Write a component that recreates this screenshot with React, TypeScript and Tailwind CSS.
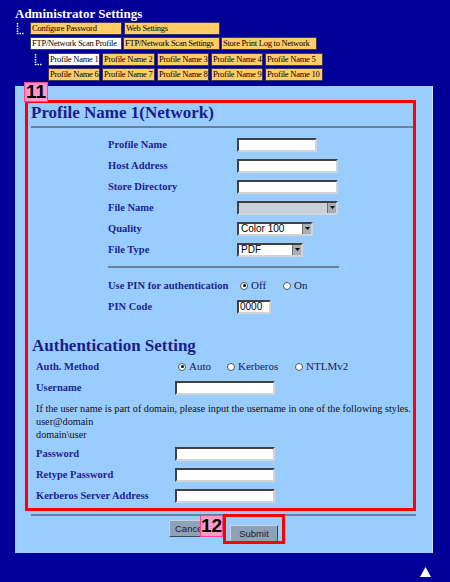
import React from "react";

function Tab({ label, active, w }: { label: string; active?: boolean; w: string }) {
  return (
    <div
      className={`${w} h-[13px] border border-[#3a3a5a] px-[1px] text-[8.5px] tracking-[-0.25px] leading-[11px] whitespace-nowrap text-black ${
        active ? "bg-white" : "bg-[#ffcc66]"
      }`}
    >
      {label}
    </div>
  );
}

function TreeIcon() {
  return (
    <svg width="10" height="12" viewBox="0 0 10 12" className="mt-[1px]">
      <path d="M1.5 0 V10.5 H8.5" stroke="#ffffff" strokeWidth="1.5" strokeDasharray="1.5 1" fill="none" />
    </svg>
  );
}

function TextInput({ w, value }: { w: string; value?: string }) {
  return (
    <div
      className={`${w} h-[14px] bg-white border-2 border-t-[#404040] border-l-[#404040] border-b-[#d4d4d4] border-r-[#d4d4d4] font-['Liberation_Sans',sans-serif] text-[10px] leading-[10px] pl-[1px] text-black`}
    >
      {value}
    </div>
  );
}

function Select({ w, value, blurred }: { w: string; value?: string; blurred?: boolean }) {
  return (
    <div
      className={`${w} h-[14px] flex border-2 border-t-[#404040] border-l-[#404040] border-b-[#d4d4d4] border-r-[#d4d4d4] ${
        blurred ? "bg-[#c9d0d8]" : "bg-white"
      }`}
    >
      <div className="flex-1 font-['Liberation_Sans',sans-serif] text-[10px] leading-[10px] pl-[2px] text-black">{value}</div>
      <div className="w-[9px] bg-[#a9adb5] border-l border-[#707070] flex items-center justify-center">
        <svg width="5" height="3" viewBox="0 0 5 3">
          <path d="M0 0 H5 L2.5 3 Z" fill="#000" />
        </svg>
      </div>
    </div>
  );
}

function Radio({ checked, label, w }: { checked?: boolean; label: string; w: string }) {
  return (
    <div className={`${w} flex items-center gap-[3px]`}>
      <span className="w-[8px] h-[8px] rounded-full bg-white border border-[#555] flex items-center justify-center">
        {checked && <span className="w-[3px] h-[3px] rounded-full bg-black" />}
      </span>
      <span className="text-[11px] text-[#1a1a50]">{label}</span>
    </div>
  );
}

function Row({ label, cols, children }: { label: string; cols: string; children: React.ReactNode }) {
  return (
    <div className={`grid ${cols} h-[21px] items-center`}>
      <div className="text-[10.5px] font-bold text-[#1f1f8f] whitespace-nowrap">{label}</div>
      <div className="flex items-center">{children}</div>
    </div>
  );
}

export default function App() {
  const top = "grid-cols-[129px_1fr]";
  const auth = "grid-cols-[139px_1fr]";
  return (
    <div className="w-[450px] h-[582px] overflow-hidden bg-[#000099] font-['Liberation_Serif',serif]">
      <div className="pl-[15px] pt-[6px] text-[13px] font-bold leading-[16px] text-white">Administrator Settings</div>

      {/* tab tree */}
      <div className="pl-[16px] flex">
        <div className="w-[14px]">
          <TreeIcon />
        </div>
        <div className="flex flex-col gap-[2px]">
          <div className="flex gap-[2px]">
            <Tab w="w-[92px]" label="Configure Password" />
            <Tab w="w-[96px]" label="Web Settings" />
          </div>
          <div className="flex gap-[1px]">
            <Tab w="w-[92px]" label="FTP/Network Scan Profile" active />
            <Tab w="w-[97px]" label="FTP/Network Scan Settings" />
            <Tab w="w-[96px]" label="Store Print Log to Network" />
          </div>
        </div>
      </div>
      <div className="pl-[34px] mt-[3px] flex">
        <div className="w-[14px]">
          <TreeIcon />
        </div>
        <div className="flex flex-col gap-[2px]">
          <div className="flex gap-[2px]">
            <Tab w="w-[52px]" label="Profile Name 1" active />
            <Tab w="w-[53px]" label="Profile Name 2" />
            <Tab w="w-[52px]" label="Profile Name 3" />
            <Tab w="w-[52px]" label="Profile Name 4" />
            <Tab w="w-[58px]" label="Profile Name 5" />
          </div>
          <div className="flex gap-[2px]">
            <Tab w="w-[52px]" label="Profile Name 6" />
            <Tab w="w-[53px]" label="Profile Name 7" />
            <Tab w="w-[52px]" label="Profile Name 8" />
            <Tab w="w-[52px]" label="Profile Name 9" />
            <Tab w="w-[58px]" label="Profile Name 10" />
          </div>
        </div>
      </div>

      {/* main panel */}
      <div className="ml-[15px] mt-[5px] w-[418px] h-[467px] bg-[#99ccff] border-r border-[#c4e2ff] pt-[14px] pl-[10px]">
        <div className="relative w-[391px] border-[3px] border-[#ff0000] pb-[2px]">
          <div className="absolute left-[-4px] top-[-21px] w-[24px] h-[20px] bg-[#ff99cc] border border-[#ff4488] font-['Liberation_Sans',sans-serif] text-[19px] font-bold leading-[18px] text-black text-center">
            11
          </div>

          <div className="pl-[3px] text-[17px] font-bold leading-[20px] text-[#1c1c8a]">Profile Name 1(Network)</div>
          <div className="ml-[3px] mt-[3px] h-[2px] bg-[#6b7f9c]" />

          <div className="pl-[80px] mt-[6px]">
            <Row label="Profile Name" cols={top}>
              <TextInput w="w-[80px]" />
            </Row>
            <Row label="Host Address" cols={top}>
              <TextInput w="w-[101px]" />
            </Row>
            <Row label="Store Directory" cols={top}>
              <TextInput w="w-[101px]" />
            </Row>
            <Row label="File Name" cols={top}>
              <Select w="w-[101px]" blurred />
            </Row>
            <Row label="Quality" cols={top}>
              <Select w="w-[76px]" value="Color 100" />
            </Row>
            <Row label="File Type" cols={top}>
              <Select w="w-[66px]" value="PDF" />
            </Row>
            <div className="mt-[6px] w-[231px] h-[2px] bg-[#6b7f9c]" />
            <div className="mt-[7px]">
              <Row label="Use PIN for authentication" cols={top}>
                <div className="pl-[3px] flex">
                  <Radio w="w-[43px]" label="Off" checked />
                  <Radio w="w-[40px]" label="On" />
                </div>
              </Row>
              <Row label="PIN Code" cols={top}>
                <TextInput w="w-[34px]" value="0000" />
              </Row>
            </div>
          </div>

          <div className="mt-[19px] pl-[4px] text-[17px] font-bold leading-[20px] text-[#1c1c8a]">Authentication Setting</div>
          <div className="pl-[8px]">
            <Row label="Auth. Method" cols={auth}>
              <div className="pl-[3px] flex">
                <Radio w="w-[49px]" label="Auto" checked />
                <Radio w="w-[68px]" label="Kerberos" />
                <Radio w="w-[60px]" label="NTLMv2" />
              </div>
            </Row>
            <Row label="Username" cols={auth}>
              <TextInput w="w-[100px]" />
            </Row>
            <div className="mt-[4px] text-[10.25px] leading-[13px] text-[#111]">
              <div className="whitespace-nowrap">
                If the user name is part of domain, please input the username in one of the following styles.
              </div>
              <div>user@domain</div>
              <div>domain\user</div>
            </div>
            <div className="mt-[2px]">
              <Row label="Password" cols={auth}>
                <TextInput w="w-[100px]" />
              </Row>
              <Row label="Retype Password" cols={auth}>
                <TextInput w="w-[100px]" />
              </Row>
              <Row label="Kerberos Server Address" cols={auth}>
                <TextInput w="w-[100px]" />
              </Row>
            </div>
          </div>
        </div>

        <div className="ml-[6px] mt-[3px] w-[385px] h-[2px] bg-[#6b7f9c]" />

        <div className="mt-[4px] flex justify-center gap-[13px] w-[397px]">
          <button className="w-[48px] h-[17px] bg-[#8ea2b8] border border-[#3c4a5c] border-t-[#c8d4e0] border-l-[#c8d4e0] font-['Liberation_Sans',sans-serif] text-[9.5px] leading-[15px] text-left pl-[5px] text-[#1a1a2a]">
            Cancel
          </button>
          <div className="relative">
            <button className="w-[48px] h-[17px] bg-[#8ea2b8] border border-[#3c4a5c] border-t-[#c8d4e0] border-l-[#c8d4e0] font-['Liberation_Sans',sans-serif] text-[9.5px] leading-[15px] text-[#1a1a2a]">
              Submit
            </button>
            <div className="absolute left-[-7px] top-[-6px] w-[62px] h-[30px] border-[3px] border-[#ff0000]" />
            <div className="absolute left-[-30px] top-[-5px] w-[23px] h-[22px] bg-[#ff99cc] border border-[#ff4488] font-['Liberation_Sans',sans-serif] text-[19px] font-bold leading-[20px] text-black text-center">
              12
            </div>
          </div>
        </div>
      </div>

      <div className="flex justify-end pr-[19px] mt-[14px]">
        <svg width="11" height="10" viewBox="0 0 11 10">
          <path d="M5.5 0 L11 10 H0 Z" fill="#ffffff" />
        </svg>
      </div>
    </div>
  );
}
